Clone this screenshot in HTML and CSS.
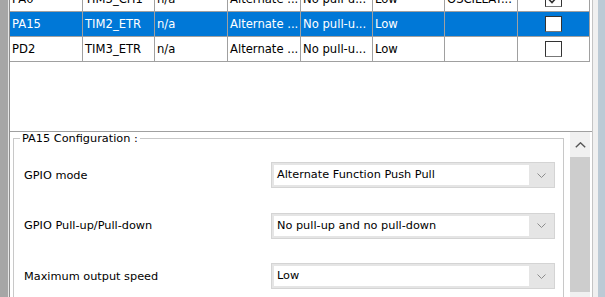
FILE: index.html
```html
<!DOCTYPE html>
<html lang="en">

<head>
    <meta charset="UTF-8">
    <title>Pin Configuration</title>
    <link rel="stylesheet" href="styles.css">
</head>

<body>
    <div class="window">
        <div class="edge-left"></div>

        <div class="main">
            <!-- Pin table -->
            <div class="table-pane">
                <div class="grid">
                    <div class="row">
                        <div class="cell">PA0</div>
                        <div class="cell">TIM3_CH1</div>
                        <div class="cell">n/a</div>
                        <div class="cell">Alternate ...</div>
                        <div class="cell">No pull-u...</div>
                        <div class="cell">Low</div>
                        <div class="cell">OSCILLAT...</div>
                        <div class="cell check">
                            <span class="box">
                                <svg width="11" height="9" viewBox="0 0 11 9"><polyline points="1,4.5 4,7.5 10,1" fill="none" stroke="#333" stroke-width="1.6"/></svg>
                            </span>
                        </div>
                    </div>
                    <div class="row selected">
                        <div class="cell">PA15</div>
                        <div class="cell">TIM2_ETR</div>
                        <div class="cell">n/a</div>
                        <div class="cell">Alternate ...</div>
                        <div class="cell">No pull-u...</div>
                        <div class="cell">Low</div>
                        <div class="cell"></div>
                        <div class="cell check"><span class="box"></span></div>
                    </div>
                    <div class="row">
                        <div class="cell">PD2</div>
                        <div class="cell">TIM3_ETR</div>
                        <div class="cell">n/a</div>
                        <div class="cell">Alternate ...</div>
                        <div class="cell">No pull-u...</div>
                        <div class="cell">Low</div>
                        <div class="cell"></div>
                        <div class="cell check"><span class="box"></span></div>
                    </div>
                </div>
            </div>

            <!-- Configuration of the selected pin -->
            <div class="config-pane">
                <div class="group">
                    <div class="group-title">PA15 Configuration :</div>

                    <div class="field">
                        <span class="label">GPIO mode</span>
                        <div class="combo">
                            <span class="combo-value">Alternate Function Push Pull</span>
                            <span class="combo-arrow">
                                <svg width="9" height="5" viewBox="0 0 9 5"><polyline points="0.5,0.5 4.5,4.5 8.5,0.5" fill="none" stroke="#8c8c8c"/></svg>
                            </span>
                        </div>
                    </div>

                    <div class="field">
                        <span class="label">GPIO Pull-up/Pull-down</span>
                        <div class="combo">
                            <span class="combo-value">No pull-up and no pull-down</span>
                            <span class="combo-arrow">
                                <svg width="9" height="5" viewBox="0 0 9 5"><polyline points="0.5,0.5 4.5,4.5 8.5,0.5" fill="none" stroke="#8c8c8c"/></svg>
                            </span>
                        </div>
                    </div>

                    <div class="field">
                        <span class="label">Maximum output speed</span>
                        <div class="combo">
                            <span class="combo-value">Low</span>
                            <span class="combo-arrow">
                                <svg width="9" height="5" viewBox="0 0 9 5"><polyline points="0.5,0.5 4.5,4.5 8.5,0.5" fill="none" stroke="#8c8c8c"/></svg>
                            </span>
                        </div>
                    </div>
                </div>

                <div class="scrollbar">
                    <div class="scroll-up">
                        <svg width="11" height="6" viewBox="0 0 11 6"><polyline points="0.8,5.3 5.5,0.8 10.2,5.3" fill="none" stroke="#555" stroke-width="1.4"/></svg>
                    </div>
                    <div class="thumb"></div>
                </div>
            </div>
        </div>

        <div class="edge-right"></div>
    </div>
</body>

</html>
```

FILE: styles.css
```css
/* General styles */
body {
    margin: 0;
    font-family: "DejaVu Sans", sans-serif;
    font-size: 11.3px;
    color: #000;
    background: #fff;
}

.window {
    display: flex;
    height: 297px;
    overflow: hidden;
}

.edge-left {
    width: 8px;
    background: #a6a6a6;
    border-right: 1px solid #e6e6e6;
}

.edge-right {
    width: 7px;
    background: #bccad5;
    border-left: 5px solid #f0f0f0;
}

.main {
    width: 584px;
    box-sizing: border-box;
    border-left: 1px solid #8e8e8e;
    border-right: 1px solid #c4c4c4;
    display: flex;
    flex-direction: column;
}

/* Pin table */
.table-pane {
    height: 132px;
    box-sizing: border-box;
    border-bottom: 1px solid #a0a0a0;
    overflow: hidden;
}

.grid {
    width: 580px;
    margin-top: -13px;
}

.row {
    display: grid;
    grid-template-columns: 73px 72px 73px 73px 72px 72px 73px 72px;
    height: 25px;
    box-sizing: border-box;
    border-bottom: 1px solid #a0a0a0;
}

.row.selected {
    background: #0078d7;
    color: #fff;
}

.cell {
    border-right: 1px solid #a0a0a0;
    padding-left: 2px;
    line-height: 24px;
    font-size: 11.6px;
    white-space: nowrap;
    overflow: hidden;
}

.check {
    display: flex;
    align-items: center;
    justify-content: center;
    padding-left: 0;
}

.box {
    width: 17px;
    height: 16px;
    box-sizing: border-box;
    border: 1px solid #333;
    border-bottom-color: #777;
    background: #fff;
    display: flex;
    align-items: center;
    justify-content: center;
}

/* Configuration pane */
.config-pane {
    flex: 1;
    display: flex;
    padding-left: 3px;
}

.group {
    position: relative;
    width: 551px;
    box-sizing: border-box;
    margin-top: 6px;
    margin-right: 6px;
    border: 1px solid #c8c8c8;
    border-bottom: none;
    padding: 23px 7px 0 10px;
    display: flex;
    flex-direction: column;
    row-gap: 24.5px;
}

.group-title {
    position: absolute;
    top: -6px;
    left: 6px;
    padding: 0 2px;
    line-height: 12px;
    background: #fff;
}

.field {
    display: grid;
    grid-template-columns: 247px 284px;
    align-items: center;
    height: 26px;
}

.combo {
    display: flex;
    height: 26px;
    box-sizing: border-box;
    border: 1px solid #d4d4d4;
    background: #e5e5e5;
    padding: 2px 0 2px 2px;
}

.combo-value {
    flex: 1;
    background: #fff;
    padding-left: 3px;
    line-height: 20px;
}

.combo-arrow {
    width: 25px;
    display: flex;
    align-items: center;
    justify-content: center;
}

/* Scrollbar */
.scrollbar {
    width: 20px;
    margin-right: 2px;
    background: #f0f0f0;
    display: flex;
    flex-direction: column;
}

.scroll-up {
    height: 25px;
    display: flex;
    align-items: center;
    justify-content: center;
}

.thumb {
    height: 135px;
    background: #cdcdcd;
}
```
